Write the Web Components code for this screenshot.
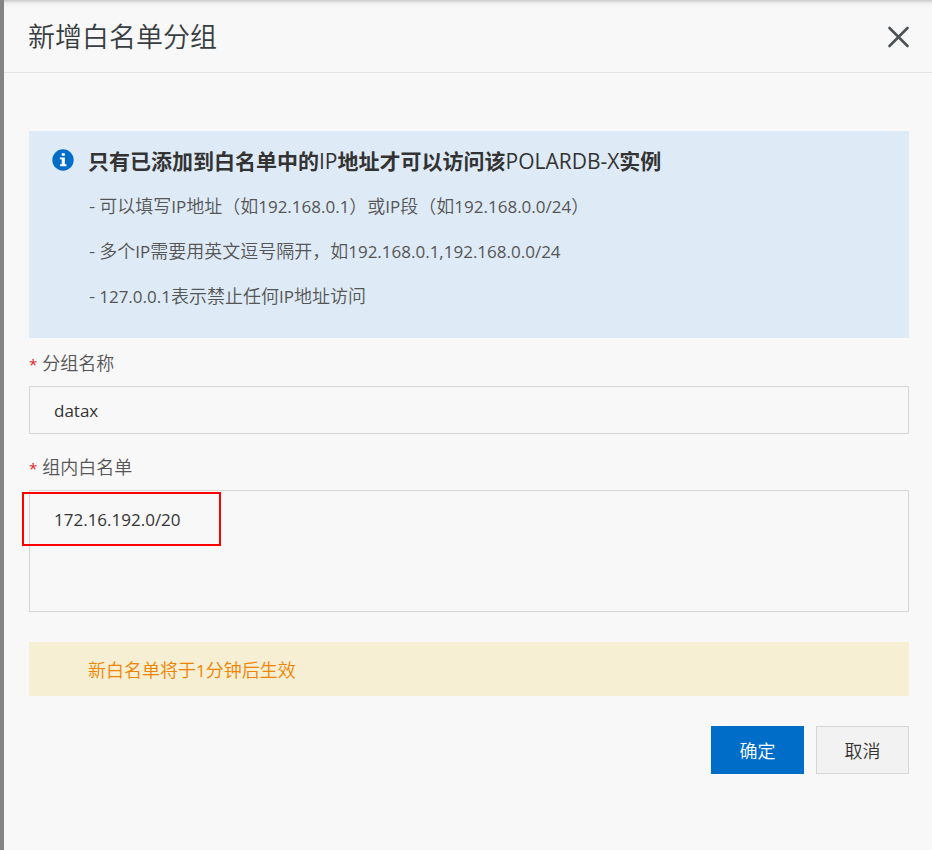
<!DOCTYPE html>
<html lang="zh-CN">
<head>
<meta charset="utf-8">
<meta name="viewport" content="width=device-width, initial-scale=1">
<title>新增白名单分组</title>
<style>
  body {
    margin: 0;
    min-height: 100vh;
    display: flex;
    background: #848484;
    color: #555;
    font: 350 18px/24px "Noto Sans CJK SC", sans-serif;
    --latin: "Open Sans", "Noto Sans CJK SC", sans-serif;
    --line: #d6d6d6;
    --primary: #006dc9;
  }

  side-panel {
    flex: 1;
    margin-left: 4px;
  }

  .latin {
    font-family: var(--latin);
    font-size: 17px;
    font-weight: 400;
    line-height: 1;
  }

  strong {
    font-weight: 700;
  }

  strong .latin {
    font-size: 21px;
    font-weight: 500;
  }
</style>
</head>
<body>
<side-panel heading="新增白名单分组">
  <info-notice>
    <strong slot="title">只有已添加到白名单中的<span class="latin">IP</span>地址才可以访问该<span class="latin">POLARDB-X</span>实例</strong>
    <div>- 可以填写<span class="latin">IP</span>地址（如<span class="latin">192.168.0.1</span>）或<span class="latin">IP</span>段（如<span class="latin">192.168.0.0/24</span>）</div>
    <div>- 多个<span class="latin">IP</span>需要用英文逗号隔开，如<span class="latin">192.168.0.1,192.168.0.0/24</span></div>
    <div>- <span class="latin">127.0.0.1</span>表示禁止任何<span class="latin">IP</span>地址访问</div>
  </info-notice>
  <form-field label="分组名称" value="datax"></form-field>
  <form-field label="组内白名单" value="172.16.192.0/20" multiline marked></form-field>
  <warn-notice>新白名单将于<span class="latin">1</span>分钟后生效</warn-notice>
  <panel-button slot="footer" primary>确定</panel-button>
  <panel-button slot="footer">取消</panel-button>
</side-panel>

<script>
class SidePanel extends HTMLElement {
  constructor() {
    super();
    this.attachShadow({ mode: "open" });
  }

  connectedCallback() {
    this.shadowRoot.innerHTML = `
    <style>
      :host {
        display: block;
        background: linear-gradient(#c8c8c8, #eee 3px, #f8f8f8 7px);
      }

      header {
        display: flex;
        align-items: center;
        justify-content: space-between;
        height: 72px;
        padding: 0 22px 0 24px;
        border-bottom: 1px solid #e4e4e4;
      }

      h1 {
        margin: 0;
        color: #373d41;
        font-size: 27px;
        font-weight: 350;
        line-height: 36px;
      }

      button {
        display: flex;
        padding: 0;
        border: 0;
        background: none;
        color: #4b5157;
      }

      main {
        padding: 58px 23px 0 25px;
      }

      footer {
        display: flex;
        justify-content: flex-end;
        gap: 12px;
        padding: 30px 23px 30px 25px;
      }
    </style>
    <header>
      <h1>${this.getAttribute("heading")}</h1>
      <button type="button" aria-label="关闭">
        <svg width="24" height="24" viewBox="0 0 24 24" fill="none" stroke="currentColor" stroke-width="2.6" stroke-linecap="round">
          <path d="M3.500 4 21.500 22M21.500 4 3.500 22"/>
        </svg>
      </button>
    </header>
    <main><slot></slot></main>
    <footer><slot name="footer"></slot></footer>
  `;
  }
}

class InfoNotice extends HTMLElement {
  constructor() {
    super();
    this.attachShadow({ mode: "open" });
  }

  connectedCallback() {
    this.shadowRoot.innerHTML = `
    <style>
      :host {
        display: block;
        padding: 15px 23px 20px;
        background: #deebf7;
      }

      .title {
        display: flex;
        align-items: center;
        gap: 14px;
        margin-bottom: 9px;
        color: #333;
        font-size: 21px;
        line-height: 28px;
      }

      .lines {
        padding-left: 37px;
        line-height: 45px;
      }
    </style>
    <div class="title">
      <svg width="22" height="22" viewBox="0 0 21 21" aria-hidden="true">
        <circle cx="10.500" cy="10.500" r="10.200" fill="#006dc9"/>
        <path fill="#fff" d="M9.300 4h3v2.400h-3zM7.500 8h4.800v6.500h1.500v2H7.700v-2h1.600V9.800H7.500z"/>
      </svg>
      <slot name="title"></slot>
    </div>
    <div class="lines"><slot></slot></div>
  `;
  }
}

class FormField extends HTMLElement {
  constructor() {
    super();
    this.attachShadow({ mode: "open" });
  }

  connectedCallback() {
    const multiline = this.hasAttribute("multiline");
    this.shadowRoot.innerHTML = `
    <style>
      :host {
        display: block;
        padding-top: 12px;
      }

      :host([multiline]) {
        padding-top: 20px;
      }

      label {
        display: block;
        margin-bottom: 12px;
      }

      label span {
        margin-right: 5px;
        color: #e02020;
        font: 15px/1 var(--latin);
      }

      .box {
        position: relative;
      }

      input, textarea {
        display: block;
        box-sizing: border-box;
        width: 100%;
        height: 48px;
        margin: 0;
        padding: 0 24px;
        border: 1px solid var(--line);
        border-radius: 0;
        outline: 0;
        background: transparent;
        color: #333;
        font: 17px/24px var(--latin);
        resize: none;
      }

      textarea {
        height: 122px;
        padding: 17px 24px;
      }

      /* callout around the first line */
      .mark {
        position: absolute;
        top: 2px;
        left: -7px;
        box-sizing: border-box;
        width: 199px;
        height: 54px;
        border: 2px solid #f00;
        pointer-events: none;
      }
    </style>
    <label for="control"><span>*</span>${this.getAttribute("label")}</label>
    <div class="box">
      ${multiline ? `<textarea id="control" required></textarea>` : `<input id="control" type="text" required>`}
      ${this.hasAttribute("marked") ? `<div class="mark"></div>` : ""}
    </div>
  `;
    this.shadowRoot.getElementById("control").value = this.getAttribute("value");
  }
}

class WarnNotice extends HTMLElement {
  constructor() {
    super();
    this.attachShadow({ mode: "open" });
    this.shadowRoot.innerHTML = `
    <style>
      :host {
        display: block;
        margin-top: 30px;
        padding: 15px 59px;
        background: #f7efd3;
        color: #f08300;
      }
    </style>
    <slot></slot>
  `;
  }
}

class PanelButton extends HTMLElement {
  constructor() {
    super();
    this.attachShadow({ mode: "open" });
    this.shadowRoot.innerHTML = `
    <style>
      :host {
        display: block;
      }

      button {
        min-width: 93px;
        height: 48px;
        padding: 0 24px;
        border: 1px solid var(--line);
        background: #f2f2f2;
        color: #333;
        font: inherit;
      }

      :host([primary]) button {
        border-color: var(--primary);
        background: var(--primary);
        color: #fff;
      }
    </style>
    <button type="button"><slot></slot></button>
  `;
  }
}

customElements.define("side-panel", SidePanel);
customElements.define("info-notice", InfoNotice);
customElements.define("form-field", FormField);
customElements.define("warn-notice", WarnNotice);
customElements.define("panel-button", PanelButton);
</script>
</body>
</html>
